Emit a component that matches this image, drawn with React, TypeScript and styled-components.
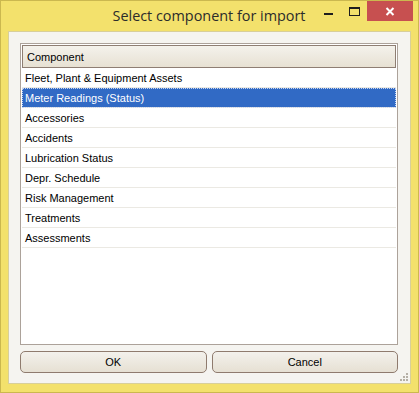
import styled, { createGlobalStyle } from 'styled-components'

const Global = createGlobalStyle`
  html, body {
    margin: 0;
    padding: 0;
    background: #ffffff;
  }
`;

const Frame = styled.div`
  box-sizing: border-box;
  width: 419px;
  height: 393px;
  background: #f3e16c;
  border: 1px solid #cbb84f;
  display: flex;
  flex-direction: column;
`;

const TitleBar = styled.div`
  height: 29px;
  display: flex;
  align-items: flex-start;
`;

const Title = styled.div`
  flex: 1;
  align-self: center;
  text-align: center;
  padding-left: 102px;
  font-family: "Open Sans", "Noto Sans", sans-serif;
  font-size: 14.4px;
  color: #2b2b2b;
  margin-top: -1px;
`;

const Controls = styled.div`
  display: flex;
  align-items: flex-start;
  margin-right: 5px;
`;

const CtrlBtn = styled.div<{ $w: number; $red?: boolean }>`
  width: ${p => p.$w}px;
  height: 20px;
  display: flex;
  align-items: center;
  justify-content: center;
  background: ${p => (p.$red ? '#c75050' : 'transparent')};
`;

const MinGlyph = styled.span`
  display: block;
  flex-shrink: 0;
  width: 9px;
  height: 2px;
  background: #1e1e1e;
  margin-top: 5px;
`;

const MaxGlyph = styled.span`
  display: block;
  flex-shrink: 0;
  box-sizing: border-box;
  width: 11px;
  height: 9px;
  border: 1px solid #1e1e1e;
  border-top-width: 2px;
`;

const Client = styled.div`
  flex: 1;
  position: relative;
  margin: 1px 7px 8px 7px;
  background: #f5f4f0;
  border: 1px solid #d8cf9a;
  padding: 11px 12px 10px 11px;
  display: flex;
  flex-direction: column;
  gap: 6px;
  box-sizing: border-box;
`;

const ListBox = styled.div`
  flex: 1;
  background: #ffffff;
  border: 1px solid #aca29a;
  padding: 1px;
  display: flex;
  flex-direction: column;
`;

const Header = styled.div`
  height: 23px;
  box-sizing: border-box;
  border: 1px solid #8e7e73;
  background: linear-gradient(#f4f2ec, #e7e1d3);
  font-family: "Liberation Sans", Tahoma, sans-serif;
  font-size: 11px;
  color: #000;
  display: flex;
  align-items: center;
  padding-left: 4px;
`;

const Row = styled.div<{ $sel?: boolean }>`
  height: 20px;
  box-sizing: border-box;
  border-bottom: 1px solid #ebe9e3;
  font-family: "Liberation Sans", Tahoma, sans-serif;
  font-size: 11px;
  display: flex;
  align-items: center;
  padding-left: 3px;
  color: ${p => (p.$sel ? '#ffffff' : '#000000')};
  background: ${p => (p.$sel ? '#316ac5' : 'transparent')};
  outline: ${p => (p.$sel ? '1px dotted #c9d6f0' : 'none')};
  outline-offset: -1px;
`;

const Buttons = styled.div`
  display: grid;
  grid-template-columns: 1fr 1fr;
  gap: 5px;
`;

const Button = styled.div`
  height: 22px;
  box-sizing: border-box;
  border: 1px solid #8f7b6e;
  border-radius: 5px;
  background: linear-gradient(#f3f1ec, #e6e0d3);
  font-family: "Liberation Sans", Tahoma, sans-serif;
  font-size: 11px;
  color: #000;
  display: flex;
  align-items: center;
  justify-content: center;
`;

const Grip = styled.svg`
  position: absolute;
  right: 1px;
  bottom: 1px;
`;

const items = [
  'Fleet, Plant & Equipment Assets',
  'Meter Readings (Status)',
  'Accessories',
  'Accidents',
  'Lubrication Status',
  'Depr. Schedule',
  'Risk Management',
  'Treatments',
  'Assessments',
];

export default function App() {
  return (
    <>
      <Global />
      <Frame>
        <TitleBar>
          <Title>Select component for import</Title>
          <Controls>
            <CtrlBtn $w={26}>
              <MinGlyph />
            </CtrlBtn>
            <CtrlBtn $w={26}>
              <MaxGlyph />
            </CtrlBtn>
            <CtrlBtn $w={46} $red>
              <svg width="10" height="9" viewBox="0 0 10 9">
                <path d="M1.5 1 L8.5 8 M8.5 1 L1.5 8" stroke="#fff" strokeWidth="2" />
              </svg>
            </CtrlBtn>
          </Controls>
        </TitleBar>
        <Client>
          <ListBox>
            <Header>Component</Header>
            {items.map((t, i) => (
              <Row key={t} $sel={i === 1}>{t}</Row>
            ))}
          </ListBox>
          <Buttons>
            <Button>OK</Button>
            <Button>Cancel</Button>
          </Buttons>
          <Grip width="10" height="10" viewBox="0 0 10 10">
            <rect x="7" y="1" width="2" height="2" fill="#b5b0a6" />
            <rect x="4" y="4" width="2" height="2" fill="#b5b0a6" />
            <rect x="7" y="4" width="2" height="2" fill="#b5b0a6" />
            <rect x="1" y="7" width="2" height="2" fill="#b5b0a6" />
            <rect x="4" y="7" width="2" height="2" fill="#b5b0a6" />
            <rect x="7" y="7" width="2" height="2" fill="#b5b0a6" />
          </Grip>
        </Client>
      </Frame>
    </>
  );
}
